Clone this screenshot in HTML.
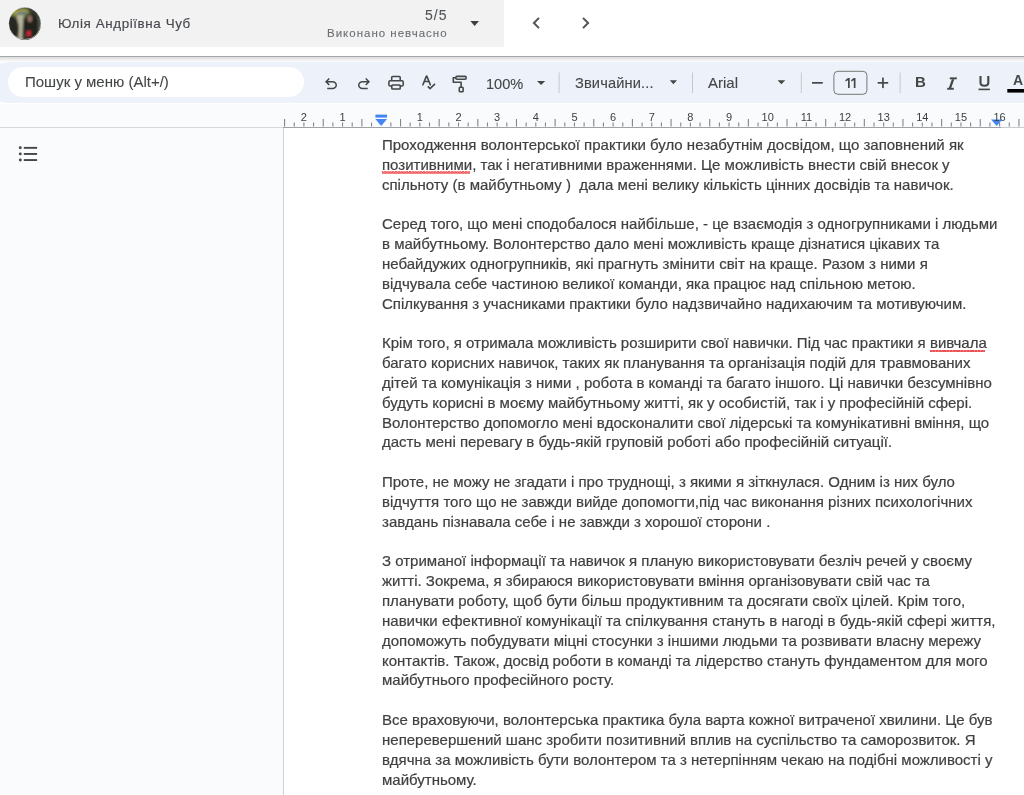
<!DOCTYPE html>
<html><head><meta charset="utf-8">
<style>
*{margin:0;padding:0;box-sizing:border-box}
html,body{width:1024px;height:795px;overflow:hidden;background:#fff;font-family:"Liberation Sans",sans-serif}
.abs{position:absolute;will-change:transform}
#hdr{left:0;top:0;width:504px;height:46.5px;background:#f2f2f2}
#avatar{left:9px;top:7.5px;width:32px;height:32px;border-radius:50%;overflow:hidden;background:#2b2d2a}
#name{left:58px;top:16.5px;font-size:13.4px;line-height:1;letter-spacing:.6px;color:#45494d;-webkit-text-stroke:.15px #45494d;white-space:pre}
#score{right:576.6px;top:7.5px;font-size:14px;line-height:1;letter-spacing:1px;color:#505458;-webkit-text-stroke:.1px #505458;white-space:pre}
#status{right:576.4px;top:27.6px;font-size:11.5px;line-height:1;color:#6a6e72;-webkit-text-stroke:.1px #6a6e72;letter-spacing:1px;white-space:pre}
#topline{left:0;top:56px;width:1024px;height:1px;background:#a3a6ab}
#shadow{left:0;top:57px;width:1024px;height:5px;background:linear-gradient(#dcdcdc,#fff)}
#toolbar{left:-12px;top:62.3px;width:1064px;height:41.3px;background:#edf2fa;border-radius:20px}
#search{left:8px;top:66.5px;width:296px;height:29.5px;background:#fff;border-radius:15px}
#searchtxt{left:25px;top:74px;font-size:15px;line-height:1;color:#444746;-webkit-text-stroke:.1px #444746;white-space:pre}
#ruler{left:0;top:103.6px;width:1024px;height:23.9px;background:#fafbfd}
#rulerline{left:0;top:127px;width:1024px;height:1px;background:linear-gradient(90deg,#d6d8db 0 283px,#9fa1a4 283px 1001px,#c9cbce 1001px)}
#side{left:0;top:128px;width:283px;height:667px;background:#f9fbfd}
#pageborder{left:283px;top:128px;width:1px;height:667px;background:#d3d3d3}
#text{left:382.4px;top:135.1px;font-size:15px;line-height:19.825px;color:#404040;-webkit-text-stroke:.2px #404040;white-space:pre;will-change:transform}
.tb{font-size:14.6px;color:#444746;-webkit-text-stroke:.12px #444746;white-space:pre}
.sq{position:relative}.sq::after{content:"";position:absolute;left:0;right:2px;top:15.6px;height:2.4px;opacity:.8;background-image:linear-gradient(45deg,transparent 30%,#e8262b 30% 62%,transparent 62%),linear-gradient(-45deg,transparent 30%,#e8262b 30% 62%,transparent 62%);background-size:2.8px 2.4px}
</style></head><body>
<div id="hdr" class="abs"></div>
<div id="avatar" class="abs"></div>
<div id="name" class="abs">Юлія Андріївна Чуб</div>
<div id="score" class="abs">5/5</div>
<div id="status" class="abs">Виконано невчасно</div>
<div id="topline" class="abs"></div>
<div id="shadow" class="abs"></div>
<div id="toolbar" class="abs"></div>
<div id="search" class="abs"></div>
<div id="searchtxt" class="abs">Пошук у меню (Alt+/)</div>
<div id="ruler" class="abs"></div>
<div id="rulerline" class="abs"></div>
<div id="side" class="abs"></div>
<svg class="abs" style="left:0;top:0" width="1024" height="128" viewBox="0 0 1024 128">
<!-- avatar -->
<defs><clipPath id="av"><circle cx="24.8" cy="23.3" r="16"/></clipPath></defs>
<defs><filter id="avb" filterUnits="userSpaceOnUse" x="0" y="0" width="50" height="48"><feGaussianBlur stdDeviation="0.9"/></filter></defs>
<g clip-path="url(#av)"><g filter="url(#avb)">
<rect x="4" y="3" width="42" height="42" fill="#3a3d35"/>
<ellipse cx="18" cy="13" rx="12" ry="6" fill="#6c7d44"/>
<path d="M12 11 L27 9.5 L27.5 12.5 L14 14.5 Z" fill="#a9a044"/>
<path d="M17 12.8 L26 11.8 L26 13.4 L18 14.4 Z" fill="#516b98"/>
<path d="M17 15 L23.5 14.5 L22 40 L18.5 40 Z" fill="#b6b39a"/>
<ellipse cx="12" cy="29" rx="7" ry="13" fill="#262822"/>
<ellipse cx="31" cy="27" rx="7.5" ry="14" fill="#22231f"/>
<ellipse cx="29.8" cy="18.6" rx="2.4" ry="3.6" fill="#8f6e60"/>
<rect x="38" y="8" width="6" height="26" fill="#4d5747"/>
<rect x="26.5" y="30.8" width="4.4" height="5.2" fill="#c82737"/>
</g></g>
<circle cx="24.8" cy="23.3" r="16.2" fill="none" stroke="#fafafa" stroke-width="0.8" opacity="0.7"/>
<!-- dropdown triangle header -->
<path d="M470.3 21 L479 21 L474.65 26 Z" fill="#3c4043"/>
<!-- chevrons -->
<path d="M539 17.9 L533.9 23 L539 28.1" fill="none" stroke="#505357" stroke-width="2"/>
<path d="M583 17.9 L588.1 23 L583 28.1" fill="none" stroke="#505357" stroke-width="2"/>
<!-- undo -->
<g transform="translate(322,75) scale(0.01875)" fill="#444746"><path transform="translate(0,960)" d="M280-200v-80h284q63 0 109.5-40T720-420q0-60-46.5-100T564-560H312l104 104-56 56-200-200 200-200 56 56-104 104h252q97 0 166.5 63T800-420q0 94-69.5 157T564-200H280Z"/></g>
<!-- redo -->
<g transform="translate(355,75) scale(0.01875)" fill="#444746"><path transform="translate(0,960)" d="M396-200q-97 0-166.5-63T160-420q0-94 69.5-157T396-640h252L544-744l56-56 200 200-200 200-56-56 104-104H396q-63 0-109.5 40T240-420q0 60 46.5 100T396-280h284v80H396Z"/></g>
<!-- print -->
<g fill="none" stroke="#444746" stroke-width="1.55" stroke-linejoin="round">
<path d="M391.7 80.6 V77.4 a0.9 0.9 0 0 1 0.9 -0.9 H399.3 a0.9 0.9 0 0 1 0.9 0.9 V80.6"/>
<rect x="388.9" y="80.7" width="14.3" height="5.3" rx="1.3"/>
<rect x="391.8" y="85.0" width="8.4" height="4" rx="0.8" fill="#edf2fa"/>
</g>
<!-- spellcheck -->
<g fill="none" stroke="#444746" stroke-width="1.6" stroke-linejoin="round" stroke-linecap="round">
<path d="M422.9 84.8 L426.3 76.4 Q426.6 75.7 426.9 76.4 L430.3 84.8 M424.3 81.5 H428.9"/>
<path d="M427.8 86.4 L430.1 88.6 L435 83.9" stroke-linecap="butt" stroke-linejoin="miter"/>
</g>
<!-- paint format -->
<g fill="none" stroke="#444746" stroke-width="1.6" stroke-linejoin="round">
<rect x="455.9" y="76.4" width="10.2" height="2.8" rx="1"/>
<path d="M455.9 77.8 H453.3 V82.3 H461.1 V87.2"/>
<rect x="459.3" y="87.3" width="3.8" height="4.4" rx="0.8"/>
</g>
<!-- zoom triangle -->
<path d="M537 81 L545.2 81 L541.1 85 Z" fill="#444746"/>
<!-- separators -->
<g fill="#c7c7c7"><rect x="558.6" y="72.5" width="1" height="20.5"/><rect x="692" y="72.5" width="1" height="20.5"/><rect x="800.8" y="72.5" width="1" height="20.5"/><rect x="899.6" y="72.5" width="1" height="20.5"/></g>
<path d="M669.8 80.2 L677 80.2 L673.4 84.2 Z" fill="#444746"/>
<path d="M777.5 80.2 L785.3 80.2 L781.4 84.2 Z" fill="#444746"/>
<!-- minus plus -->
<rect x="812" y="82" width="10.8" height="1.7" fill="#444746"/>
<rect x="877.7" y="82" width="10.5" height="1.7" fill="#444746"/><rect x="882.1" y="77.6" width="1.7" height="10.5" fill="#444746"/>
<!-- size box -->
<rect x="833.9" y="71.3" width="33" height="23" rx="4" fill="none" stroke="#747775" stroke-width="1"/>
<!-- 11 -->
<g fill="#444746"><path d="M848 78 H849.7 V88 H848 V80.3 L845.4 81.6 V80 Z"/><path d="M853.8 78 H855.5 V88 H853.8 V80.3 L851.2 81.6 V80 Z"/></g>
<!-- italic I -->
<g fill="#444746"><rect x="949.8" y="77.4" width="7" height="1.9"/><rect x="947.2" y="87.8" width="6.6" height="1.9"/><path d="M951.9 79.2 L954.3 79.2 L951.2 87.9 L948.8 87.9 Z"/></g>
<path d="M980.5 75.9 V82.4 Q980.5 85.7 984.4 85.7 Q988.3 85.7 988.3 82.4 V75.9" fill="none" stroke="#444746" stroke-width="2.1"/>
<!-- underline bar -->
<rect x="978.5" y="88.6" width="11.4" height="1.6" fill="#444746"/>
<rect x="1007.3" y="89" width="20" height="3.6" fill="#000"/>
<!-- indent markers -->
<rect x="375.4" y="114.6" width="11.6" height="3" fill="#4285f4"/>
<path d="M375.4 119 L387 119 L381.2 126 Z" fill="#4285f4"/>
<path d="M991 119.5 L1002.4 119.5 L996.7 126 Z" fill="#4285f4"/>
</svg>
<svg class="abs" style="left:0;top:128px" width="60" height="50" viewBox="0 128 60 50"><g fill="#444746"><circle cx="20.3" cy="147.8" r="1.45"/><circle cx="20.3" cy="153.9" r="1.45"/><circle cx="20.3" cy="160" r="1.45"/><rect x="23.8" y="146.9" width="13.3" height="1.9"/><rect x="23.8" y="153" width="13.3" height="1.9"/><rect x="23.8" y="159.1" width="13.3" height="1.9"/></g></svg>
<div class="abs tb" style="left:486px;top:75.6px">100%</div>
<div class="abs tb" style="left:574.6px;top:74.5px;letter-spacing:.15px">Звичайни...</div>
<div class="abs tb" style="left:708.3px;top:74.2px;font-size:15px">Arial</div>

<div class="abs" style="left:914.6px;top:73.4px;font-size:15px;font-weight:bold;color:#444746">B</div>


<div class="abs" style="left:1013.2px;top:71.9px;font-size:14px;font-weight:bold;color:#444746">A</div>

<svg class="abs" style="left:0;top:0" width="1024" height="795" viewBox="0 0 1024 795">
<g stroke="#80868b" stroke-width="1.1"><line x1="284.57" y1="119" x2="284.57" y2="126.5"/><line x1="294.24" y1="122.5" x2="294.24" y2="126.5"/><line x1="303.90" y1="122.5" x2="303.90" y2="126.5"/><line x1="313.56" y1="122.5" x2="313.56" y2="126.5"/><line x1="323.23" y1="119" x2="323.23" y2="126.5"/><line x1="332.89" y1="122.5" x2="332.89" y2="126.5"/><line x1="342.55" y1="122.5" x2="342.55" y2="126.5"/><line x1="352.21" y1="122.5" x2="352.21" y2="126.5"/><line x1="361.88" y1="119" x2="361.88" y2="126.5"/><line x1="371.54" y1="122.5" x2="371.54" y2="126.5"/><line x1="390.86" y1="122.5" x2="390.86" y2="126.5"/><line x1="400.52" y1="119" x2="400.52" y2="126.5"/><line x1="410.19" y1="122.5" x2="410.19" y2="126.5"/><line x1="419.85" y1="122.5" x2="419.85" y2="126.5"/><line x1="429.51" y1="122.5" x2="429.51" y2="126.5"/><line x1="439.17" y1="119" x2="439.17" y2="126.5"/><line x1="448.84" y1="122.5" x2="448.84" y2="126.5"/><line x1="458.50" y1="122.5" x2="458.50" y2="126.5"/><line x1="468.16" y1="122.5" x2="468.16" y2="126.5"/><line x1="477.82" y1="119" x2="477.82" y2="126.5"/><line x1="487.49" y1="122.5" x2="487.49" y2="126.5"/><line x1="497.15" y1="122.5" x2="497.15" y2="126.5"/><line x1="506.81" y1="122.5" x2="506.81" y2="126.5"/><line x1="516.48" y1="119" x2="516.48" y2="126.5"/><line x1="526.14" y1="122.5" x2="526.14" y2="126.5"/><line x1="535.80" y1="122.5" x2="535.80" y2="126.5"/><line x1="545.46" y1="122.5" x2="545.46" y2="126.5"/><line x1="555.12" y1="119" x2="555.12" y2="126.5"/><line x1="564.79" y1="122.5" x2="564.79" y2="126.5"/><line x1="574.45" y1="122.5" x2="574.45" y2="126.5"/><line x1="584.11" y1="122.5" x2="584.11" y2="126.5"/><line x1="593.77" y1="119" x2="593.77" y2="126.5"/><line x1="603.44" y1="122.5" x2="603.44" y2="126.5"/><line x1="613.10" y1="122.5" x2="613.10" y2="126.5"/><line x1="622.76" y1="122.5" x2="622.76" y2="126.5"/><line x1="632.42" y1="119" x2="632.42" y2="126.5"/><line x1="642.09" y1="122.5" x2="642.09" y2="126.5"/><line x1="651.75" y1="122.5" x2="651.75" y2="126.5"/><line x1="661.41" y1="122.5" x2="661.41" y2="126.5"/><line x1="671.08" y1="119" x2="671.08" y2="126.5"/><line x1="680.74" y1="122.5" x2="680.74" y2="126.5"/><line x1="690.40" y1="122.5" x2="690.40" y2="126.5"/><line x1="700.06" y1="122.5" x2="700.06" y2="126.5"/><line x1="709.72" y1="119" x2="709.72" y2="126.5"/><line x1="719.39" y1="122.5" x2="719.39" y2="126.5"/><line x1="729.05" y1="122.5" x2="729.05" y2="126.5"/><line x1="738.71" y1="122.5" x2="738.71" y2="126.5"/><line x1="748.38" y1="119" x2="748.38" y2="126.5"/><line x1="758.04" y1="122.5" x2="758.04" y2="126.5"/><line x1="767.70" y1="122.5" x2="767.70" y2="126.5"/><line x1="777.36" y1="122.5" x2="777.36" y2="126.5"/><line x1="787.02" y1="119" x2="787.02" y2="126.5"/><line x1="796.69" y1="122.5" x2="796.69" y2="126.5"/><line x1="806.35" y1="122.5" x2="806.35" y2="126.5"/><line x1="816.01" y1="122.5" x2="816.01" y2="126.5"/><line x1="825.67" y1="119" x2="825.67" y2="126.5"/><line x1="835.34" y1="122.5" x2="835.34" y2="126.5"/><line x1="845.00" y1="122.5" x2="845.00" y2="126.5"/><line x1="854.66" y1="122.5" x2="854.66" y2="126.5"/><line x1="864.33" y1="119" x2="864.33" y2="126.5"/><line x1="873.99" y1="122.5" x2="873.99" y2="126.5"/><line x1="883.65" y1="122.5" x2="883.65" y2="126.5"/><line x1="893.31" y1="122.5" x2="893.31" y2="126.5"/><line x1="902.97" y1="119" x2="902.97" y2="126.5"/><line x1="912.64" y1="122.5" x2="912.64" y2="126.5"/><line x1="922.30" y1="122.5" x2="922.30" y2="126.5"/><line x1="931.96" y1="122.5" x2="931.96" y2="126.5"/><line x1="941.62" y1="119" x2="941.62" y2="126.5"/><line x1="951.29" y1="122.5" x2="951.29" y2="126.5"/><line x1="960.95" y1="122.5" x2="960.95" y2="126.5"/><line x1="970.61" y1="122.5" x2="970.61" y2="126.5"/><line x1="980.27" y1="119" x2="980.27" y2="126.5"/><line x1="989.94" y1="122.5" x2="989.94" y2="126.5"/><line x1="999.60" y1="122.5" x2="999.60" y2="126.5"/><line x1="1009.26" y1="122.5" x2="1009.26" y2="126.5"/><line x1="1018.92" y1="119" x2="1018.92" y2="126.5"/><line x1="1028.59" y1="122.5" x2="1028.59" y2="126.5"/></g>
<g font-family="Liberation Sans" font-size="11" fill="#3c4043" text-anchor="middle" transform="translate(0,0.6)"><text x="303.90" y="120.3">2</text><text x="342.55" y="120.3">1</text><text x="419.85" y="120.3">1</text><text x="458.50" y="120.3">2</text><text x="497.15" y="120.3">3</text><text x="535.80" y="120.3">4</text><text x="574.45" y="120.3">5</text><text x="613.10" y="120.3">6</text><text x="651.75" y="120.3">7</text><text x="690.40" y="120.3">8</text><text x="729.05" y="120.3">9</text><text x="767.70" y="120.3">10</text><text x="806.35" y="120.3">11</text><text x="845.00" y="120.3">12</text><text x="883.65" y="120.3">13</text><text x="922.30" y="120.3">14</text><text x="960.95" y="120.3">15</text><text x="999.60" y="120.3">16</text><text x="1038.25" y="120.3">17</text></g>
</svg>
<div id="pageborder" class="abs"></div>
<div id="text" class="abs">Проходження волонтерської практики було незабутнім досвідом, що заповнений як
<span class="sq">позитивними</span>, так і негативними враженнями. Це можливість внести свій внесок у
спільноту (в майбутньому )  дала мені велику кількість цінних досвідів та навичок.

Серед того, що мені сподобалося найбільше, - це взаємодія з одногрупниками і людьми
в майбутньому. Волонтерство дало мені можливість краще дізнатися цікавих та
небайдужих одногрупників, які прагнуть змінити світ на краще. Разом з ними я
відчувала себе частиною великої команди, яка працює над спільною метою.
Спілкування з учасниками практики було надзвичайно надихаючим та мотивуючим.

Крім того, я отримала можливість розширити свої навички. Під час практики я <span class="sq">вивчала</span>
багато корисних навичок, таких як планування та організація подій для травмованих
дітей та комунікація з ними , робота в команді та багато іншого. Ці навички безсумнівно
будуть корисні в моєму майбутньому житті, як у особистій, так і у професійній сфері.
Волонтерство допомогло мені вдосконалити свої лідерські та комунікативні вміння, що
дасть мені перевагу в будь-якій груповій роботі або професійній ситуації.

Проте, не можу не згадати і про труднощі, з якими я зіткнулася. Одним із них було
відчуття того що не завжди вийде допомогти,під час виконання різних психологічних
завдань пізнавала себе і не завжди з хорошої сторони .

З отриманої інформації та навичок я планую використовувати безліч речей у своєму
житті. Зокрема, я збираюся використовувати вміння організовувати свій час та
планувати роботу, щоб бути більш продуктивним та досягати своїх цілей. Крім того,
навички ефективної комунікації та спілкування стануть в нагоді в будь-якій сфері життя,
допоможуть побудувати міцні стосунки з іншими людьми та розвивати власну мережу
контактів. Також, досвід роботи в команді та лідерство стануть фундаментом для мого
майбутнього професійного росту.

Все враховуючи, волонтерська практика була варта кожної витраченої хвилини. Це був
неперевершений шанс зробити позитивний вплив на суспільство та саморозвиток. Я
вдячна за можливість бути волонтером та з нетерпінням чекаю на подібні можливості у
майбутньому.</div>
</body></html>
